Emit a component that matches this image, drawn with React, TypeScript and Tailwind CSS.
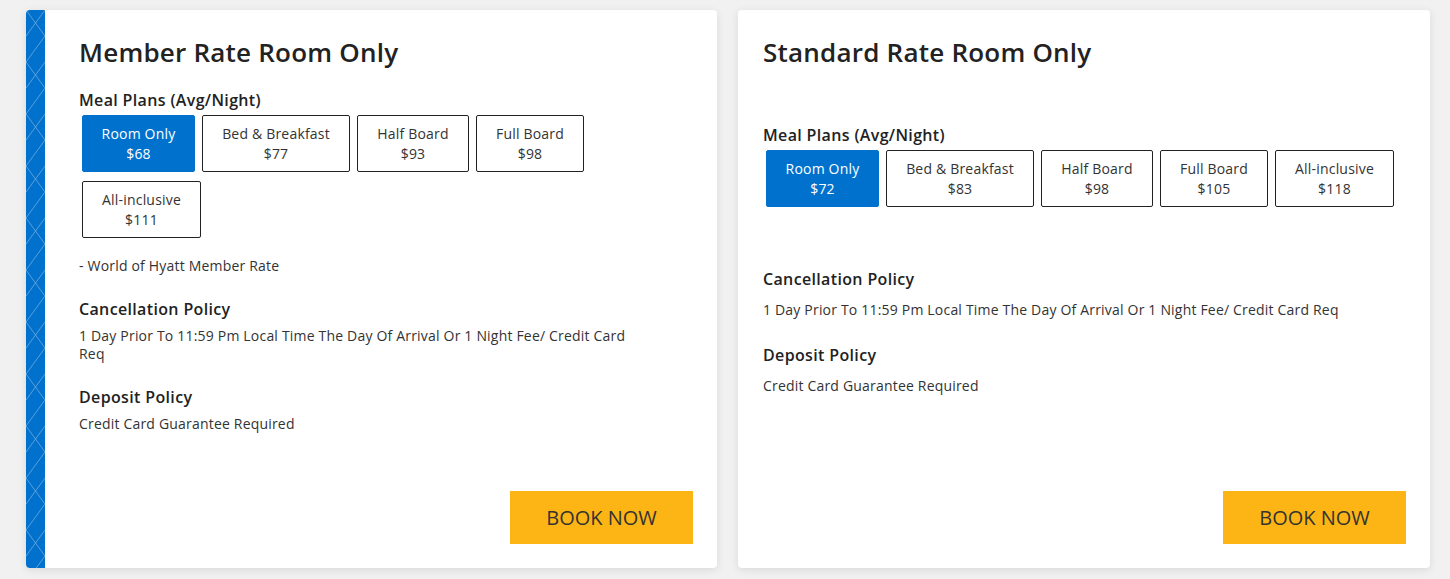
import React from "react";

type Plan = { name: string; price: string; w: string; selected?: boolean };

const memberPlans: Plan[] = [
  { name: "Room Only", price: "$68", w: "w-[113px]", selected: true },
  { name: "Bed & Breakfast", price: "$77", w: "w-[148px]" },
  { name: "Half Board", price: "$93", w: "w-[112px]" },
  { name: "Full Board", price: "$98", w: "w-[108px]" },
  { name: "All-inclusive", price: "$111", w: "w-[119px]" },
];

const standardPlans: Plan[] = [
  { name: "Room Only", price: "$72", w: "w-[113px]", selected: true },
  { name: "Bed & Breakfast", price: "$83", w: "w-[148px]" },
  { name: "Half Board", price: "$98", w: "w-[112px]" },
  { name: "Full Board", price: "$105", w: "w-[108px]" },
  { name: "All-inclusive", price: "$118", w: "w-[119px]" },
];

const PlanButton = ({ plan }: { plan: Plan }) => (
  <button
    className={
      "h-[57px] rounded-[2px] flex flex-col items-center justify-center text-[14px] leading-[20px] tracking-[0.19px] " +
      plan.w +
      (plan.selected
        ? " bg-[#0072ce] border border-[#0072ce] text-white font-medium"
        : " bg-white border border-[#222] text-[#333]")
    }
  >
    <span>{plan.name}</span>
    <span>{plan.price}</span>
  </button>
);

const BookNow = () => (
  <div className="mt-auto flex justify-end">
    <button className="w-[183px] h-[53px] bg-[#fdb515] text-[20px] text-[#333]">BOOK NOW</button>
  </div>
);

const Stripe = () => (
  <div className="w-[19px] shrink-0 bg-[#0072ce] rounded-l-[4px] overflow-hidden">
    <svg width="19" height="558" className="block">
      <defs>
        <pattern id="lattice" width="19" height="52" patternUnits="userSpaceOnUse">
          <path d="M0 52 L19 26 M0 26 L19 0 M0 0 L19 26" stroke="#7fb0de" strokeOpacity="0.7" strokeWidth="1" fill="none" />
        </pattern>
      </defs>
      <rect width="19" height="558" fill="url(#lattice)" />
    </svg>
  </div>
);

const label = "text-[16px] leading-[24px] tracking-[0.35px] font-semibold text-[#222]";
const body = "text-[14px] leading-[18px] tracking-[0.19px] text-[#333]";
const title = "text-[26px] leading-[36px] tracking-[0.22px] font-semibold text-[#222]";

export default function App() {
  return (
    <div
      className="w-full h-[579px] bg-[#f1f1f1] pt-[10px] pl-[26px] grid grid-cols-[691px_692px] gap-x-[21px] items-start"
      style={{ fontFamily: '"Open Sans", "Noto Sans", sans-serif' }}
    >
      {/* member rate card */}
      <div className="h-[558px] bg-white rounded-[4px] shadow-[0_2px_8px_rgba(0,0,0,0.1)] flex">
        <Stripe />
        <div className="flex-1 flex flex-col pl-[34px] pr-[24px] pt-[24px] pb-[24px]">
          <h2 className={title}>Member Rate Room Only</h2>
          <div className={"mt-[18px] " + label}>Meal Plans (Avg/Night)</div>
          <div className="mt-[3px] ml-[3px] flex flex-wrap gap-x-[7px] gap-y-[9px] w-[520px]">
            {memberPlans.map((p) => (
              <PlanButton key={p.name} plan={p} />
            ))}
          </div>
          <div className={"mt-[18px] leading-[20px] " + body}>- World of Hyatt Member Rate</div>
          <div className={"mt-[21px] " + label}>Cancellation Policy</div>
          <p className={"mt-[6px] max-w-[550px] " + body}>
            1 Day Prior To 11:59 Pm Local Time The Day Of Arrival Or 1 Night Fee/ Credit Card Req
          </p>
          <div className={"mt-[22px] " + label}>Deposit Policy</div>
          <p className={"mt-[6px] " + body}>Credit Card Guarantee Required</p>
          <BookNow />
        </div>
      </div>

      {/* standard rate card */}
      <div className="h-[558px] bg-white rounded-[4px] shadow-[0_2px_8px_rgba(0,0,0,0.1)] flex flex-col pl-[25px] pr-[24px] pt-[24px] pb-[24px]">
        <h2 className={title}>Standard Rate Room Only</h2>
        <div className={"mt-[53px] " + label}>Meal Plans (Avg/Night)</div>
        <div className="mt-[3px] ml-[3px] flex flex-wrap gap-x-[7px] gap-y-[9px]">
          {standardPlans.map((p) => (
            <PlanButton key={p.name} plan={p} />
          ))}
        </div>
        <div className={"mt-[60px] " + label}>Cancellation Policy</div>
        <p className={"mt-[10px] " + body}>
          1 Day Prior To 11:59 Pm Local Time The Day Of Arrival Or 1 Night Fee/ Credit Card Req
        </p>
        <div className={"mt-[24px] " + label}>Deposit Policy</div>
        <p className={"mt-[10px] " + body}>Credit Card Guarantee Required</p>
        <BookNow />
      </div>
    </div>
  );
}
